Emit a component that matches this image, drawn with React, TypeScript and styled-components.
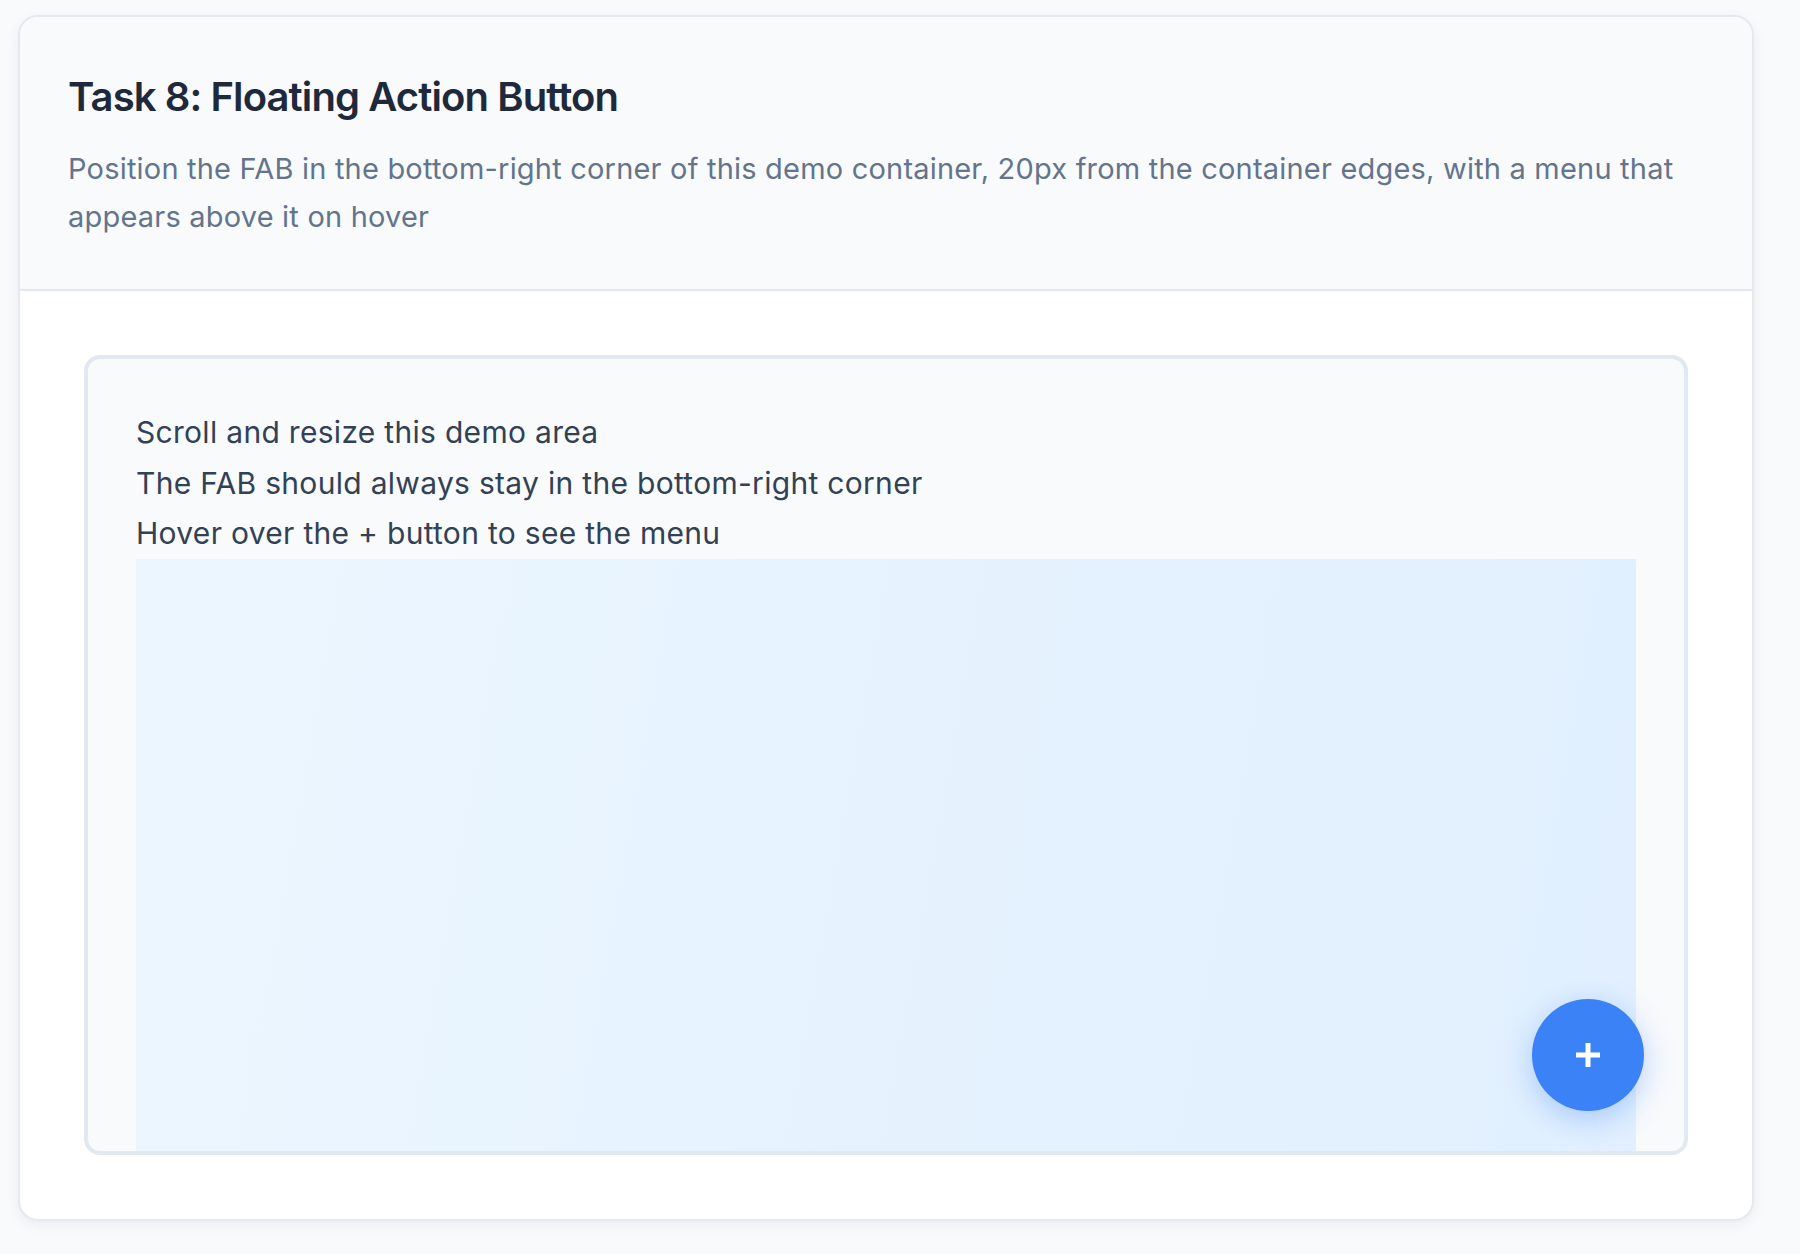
import styled, { createGlobalStyle } from 'styled-components';

const GlobalStyle = createGlobalStyle`
  html, body {
    margin: 0;
    padding: 0;
    background: #f8fafc;
  }
  body {
    font-family: Inter, 'Noto Sans', 'Liberation Sans', sans-serif;
    -webkit-font-smoothing: antialiased;
  }
`;

const Page = styled.div`
  padding: 15px 0 34px 18px;
`;

const TaskCard = styled.section`
  width: 1736px;
  box-sizing: border-box;
  background: #ffffff;
  border: 2px solid #e5e9ef;
  border-radius: 20px;
  box-shadow: 0 4px 14px rgba(15, 23, 42, 0.06);
  overflow: hidden;
`;

const CardHeader = styled.header`
  background: #f8fafc;
  border-bottom: 2px solid #e2e8f0;
  padding: 56px 48px 48px;
  display: flex;
  flex-direction: column;
  gap: 24px;
`;

const Title = styled.h2`
  margin: 0;
  font-size: 40px;
  line-height: 48px;
  font-weight: 600;
  color: #1e293b;
  letter-spacing: -0.9px;
`;

const Description = styled.p`
  margin: 0;
  font-size: 29px;
  line-height: 48px;
  color: #64748b;
  letter-spacing: 0.2px;
`;

const CardBody = styled.div`
  padding: 64px;
`;

const DemoContainer = styled.div`
  position: relative;
  height: 800px;
  box-sizing: border-box;
  border: 4px solid #e2e8f0;
  border-radius: 16px;
  background: #f8fafc;
  overflow: hidden;
`;

const DemoScroll = styled.div`
  height: 100%;
  box-sizing: border-box;
  padding: 48px 48px 0;
  overflow: hidden;
`;

const DemoLine = styled.p`
  margin: 0;
  font-size: 30px;
  line-height: 50.7px;
  color: #334155;
  letter-spacing: 0.3px;
`;

const FillerArea = styled.div`
  height: 1600px;
  background: linear-gradient(100deg, #ecf6ff 0%, #e5f2fe 50%, #e0effe 100%);
`;

const Fab = styled.button`
  position: absolute;
  right: 40px;
  bottom: 40px;
  width: 112px;
  height: 112px;
  border: none;
  border-radius: 50%;
  background: #3b82f6;
  box-shadow: 0 8px 30px rgba(59, 130, 246, 0.35);
  display: flex;
  align-items: center;
  justify-content: center;
  cursor: pointer;
  padding: 0;
`;

const lines = [
  'Scroll and resize this demo area',
  'The FAB should always stay in the bottom-right corner',
  'Hover over the + button to see the menu',
];

function App() {
  return (
    <>
      <GlobalStyle />
      <Page>
        <TaskCard>
          <CardHeader>
            <Title>Task 8: Floating Action Button</Title>
            <Description>
              Position the FAB in the bottom-right corner of this demo container, 20px from the container edges, with a
              menu that appears above it on hover
            </Description>
          </CardHeader>
          <CardBody>
            <DemoContainer>
              <DemoScroll>
                {lines.map((line) => (
                  <DemoLine key={line}>{line}</DemoLine>
                ))}
                <FillerArea />
              </DemoScroll>
              <Fab aria-label='Open menu'>
                <svg width='24' height='24' viewBox='0 0 24 24'>
                  <path d='M12 0v24M0 12h24' stroke='#ffffff' strokeWidth='5' />
                </svg>
              </Fab>
            </DemoContainer>
          </CardBody>
        </TaskCard>
      </Page>
    </>
  );
}

export default App;
